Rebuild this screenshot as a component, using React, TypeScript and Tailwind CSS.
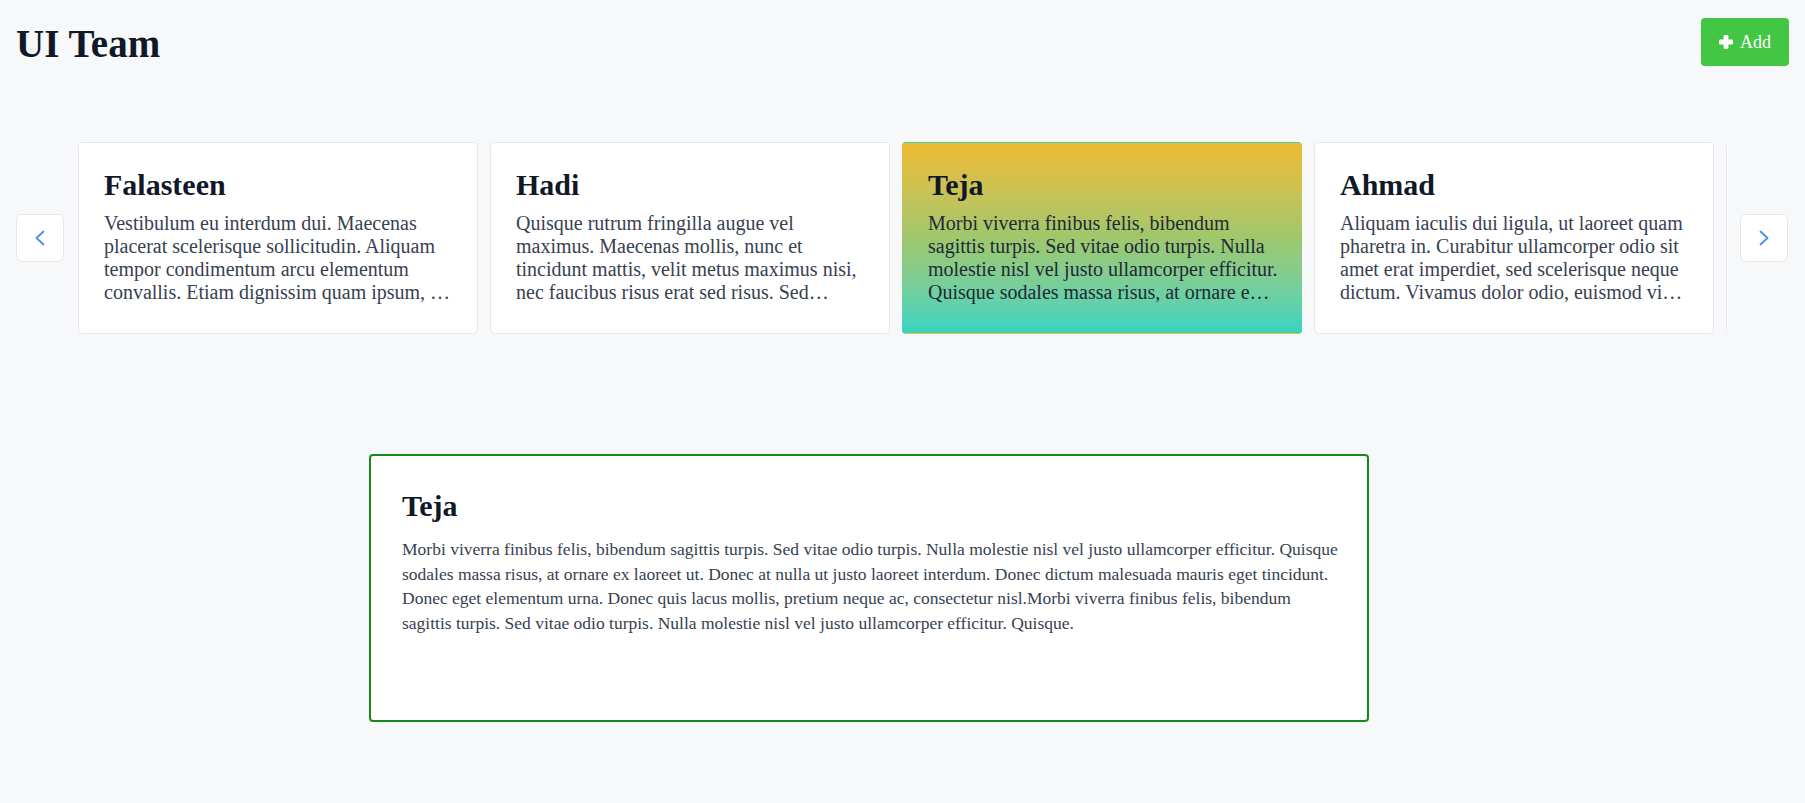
type Member = {
    name: string;
    preview: string;
    bio: string;
};

const members: Member[] = [
    {
        name: "Falasteen",
        preview: "Vestibulum eu interdum dui. Maecenas placerat scelerisque sollicitudin. Aliquam tempor condimentum arcu elementum convallis. Etiam dignissim quam ipsum, …",
        bio: "Vestibulum eu interdum dui. Maecenas placerat scelerisque sollicitudin. Aliquam tempor condimentum arcu elementum convallis. Etiam dignissim quam ipsum, vel tempus nisl luctus non.",
    },
    {
        name: "Hadi",
        preview: "Quisque rutrum fringilla augue vel maximus. Maecenas mollis, nunc et tincidunt mattis, velit metus maximus nisi, nec faucibus risus erat sed risus. Sed…",
        bio: "Quisque rutrum fringilla augue vel maximus. Maecenas mollis, nunc et tincidunt mattis, velit metus maximus nisi, nec faucibus risus erat sed risus. Sed ut lorem at magna dictum aliquet.",
    },
    {
        name: "Teja",
        preview: "Morbi viverra finibus felis, bibendum sagittis turpis. Sed vitae odio turpis. Nulla molestie nisl vel justo ullamcorper efficitur. Quisque sodales massa risus, at ornare e…",
        bio: "Morbi viverra finibus felis, bibendum sagittis turpis. Sed vitae odio turpis. Nulla molestie nisl vel justo ullamcorper efficitur. Quisque sodales massa risus, at ornare ex laoreet ut. Donec at nulla ut justo laoreet interdum. Donec dictum malesuada mauris eget tincidunt. Donec eget elementum urna. Donec quis lacus mollis, pretium neque ac, consectetur nisl.Morbi viverra finibus felis, bibendum sagittis turpis. Sed vitae odio turpis. Nulla molestie nisl vel justo ullamcorper efficitur. Quisque.",
    },
    {
        name: "Ahmad",
        preview: "Aliquam iaculis dui ligula, ut laoreet quam pharetra in. Curabitur ullamcorper odio sit amet erat imperdiet, sed scelerisque neque dictum. Vivamus dolor odio, euismod vi…",
        bio: "Aliquam iaculis dui ligula, ut laoreet quam pharetra in. Curabitur ullamcorper odio sit amet erat imperdiet, sed scelerisque neque dictum. Vivamus dolor odio, euismod vitae tortor non.",
    },
    {
        name: "Sara",
        preview: "",
        bio: "",
    },
];

const selected = "Teja";

function Arrow({ dir }: { dir: "left" | "right" }) {
    return (
        <button className="w-12 h-12 shrink-0 flex items-center justify-center bg-white border border-[#e5e7eb] rounded-md">
            <svg width="10" height="16" viewBox="0 0 10 16" fill="none">
                <polyline
                    points={dir === "left" ? "8.5,1.5 1.5,8 8.5,14.5" : "1.5,1.5 8.5,8 1.5,14.5"}
                    stroke="#4a8fe2"
                    strokeWidth="1.8"
                    strokeLinecap="round"
                    strokeLinejoin="round"
                />
            </svg>
        </button>
    );
}

function PlusIcon() {
    return (
        <svg width="14" height="14" viewBox="0 0 14 14" fill="white">
            <rect x="4.6" y="0" width="4.8" height="14" rx="1.2" />
            <rect x="0" y="4.6" width="14" height="4.8" rx="1.2" />
        </svg>
    );
}

function Card({ member }: { member: Member }) {
    const active = member.name === selected;
    return (
        <div
            className={
                active
                    ? "w-[400px] h-[192px] shrink-0 mx-[6px] rounded border border-transparent bg-linear-to-b from-[#efbb2e] via-[#9fc76c] to-[#31d4c2] pt-6 pl-[25px] pr-[23px]"
                    : "w-[400px] h-[192px] shrink-0 mx-[6px] rounded border border-[#e6e7ea] bg-white pt-6 pl-[25px] pr-[23px]"
            }
        >
            {member.preview && (
                <>
                    <h2 className="text-[30px] leading-[36px] font-bold text-[#111827] mb-[9px]">{member.name}</h2>
                    <p className={active ? "text-[20px] leading-[23px] text-[#1f2937]" : "text-[20px] leading-[23px] text-[#374151]"}>
                        {member.preview}
                    </p>
                </>
            )}
        </div>
    );
}

export default function App() {
    const current = members.find((m) => m.name === selected)!;
    return (
        <div className="min-h-screen bg-[#f7f8f9] font-['Liberation_Serif',serif]">
            <div className="flex justify-between items-start pl-4 pr-4 pt-[18px]">
                <h1 className="text-[39px] leading-[44px] font-bold text-[#111827] mt-[4px]">UI Team</h1>
                <button className="w-[88px] h-12 flex items-center justify-center gap-[7px] bg-[#43c643] rounded text-white text-[18px]">
                    <PlusIcon />
                    <span>Add</span>
                </button>
            </div>

            <div className="flex items-center pl-4 pr-[17px] mt-[76px]">
                <Arrow dir="left" />
                <div className="flex-1 overflow-hidden ml-2 mr-3">
                    <div className="flex">
                        {members.map((m) => (
                            <Card key={m.name} member={m} />
                        ))}
                    </div>
                </div>
                <Arrow dir="right" />
            </div>

            <div className="w-[1000px] h-[268px] ml-[369px] mt-[120px] border-2 border-[#168b16] rounded bg-white pt-[32px] pl-[31px] pr-[25px]">
                <h2 className="text-[30px] leading-[36px] font-bold text-[#111827] mb-[13px]">{current.name}</h2>
                <p className="text-[17.5px] leading-[24.5px] text-[#374151]">{current.bio}</p>
            </div>
        </div>
    );
}
